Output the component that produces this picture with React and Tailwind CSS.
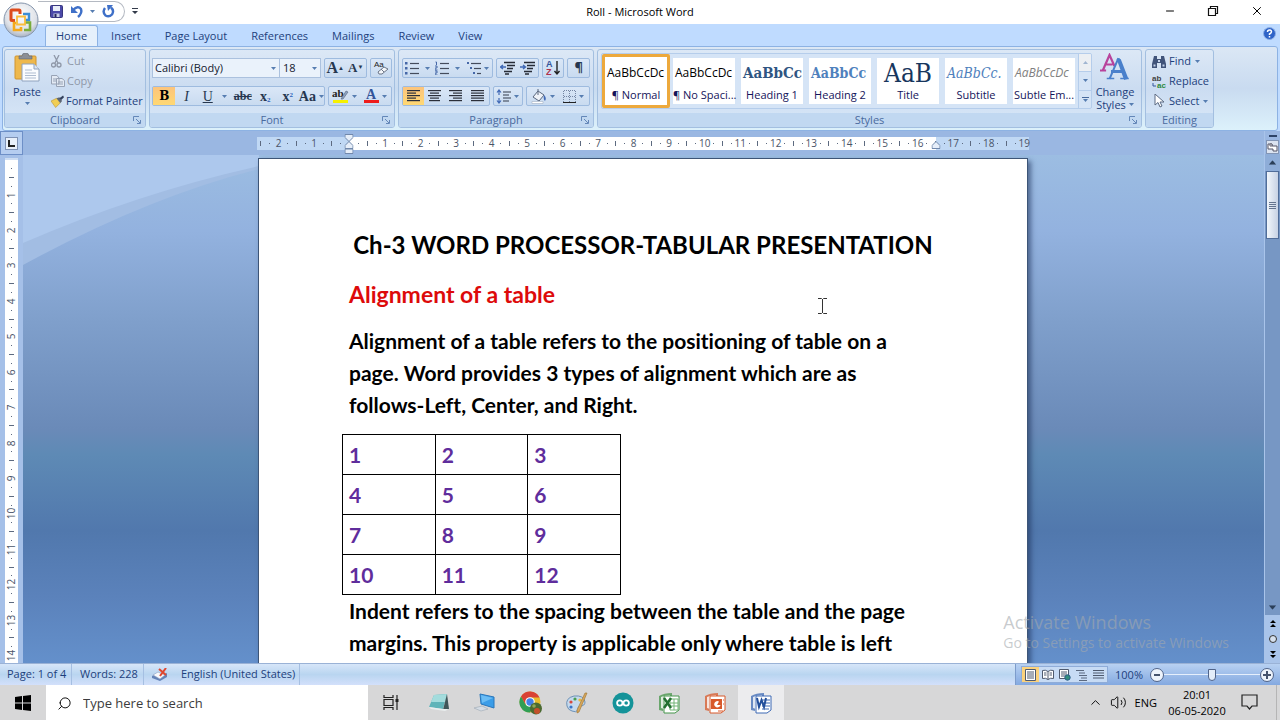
import { useState } from 'react';
import clsx from 'clsx';
import { ChevronUp, Volume2, Search, Minus, X } from 'lucide-react';

const tabs = ['Home', 'Insert', 'Page Layout', 'References', 'Mailings', 'Review', 'View'];

const styleCards = [
  { name: '¶ Normal', sample: 'AaBbCcDc', look: "font-['Open_Sans',sans-serif] text-[12px] text-black" },
  { name: '¶ No Spaci...', sample: 'AaBbCcDc', look: "font-['Open_Sans',sans-serif] text-[12px] text-black" },
  { name: 'Heading 1', sample: 'AaBbCc', look: "font-['DejaVu_Serif_Condensed','DejaVu_Serif',serif] text-[15px] font-bold text-[#2f5582]" },
  { name: 'Heading 2', sample: 'AaBbCc', look: "font-['DejaVu_Serif_Condensed','DejaVu_Serif',serif] text-[14px] font-bold text-[#4f81bd]" },
  { name: 'Title', sample: 'AaB', look: "font-['DejaVu_Serif_Condensed','DejaVu_Serif',serif] text-[26px] text-[#17365d]" },
  { name: 'Subtitle', sample: 'AaBbCc.', look: "font-['DejaVu_Serif_Condensed','DejaVu_Serif',serif] text-[14px] italic text-[#4f81bd]" },
  { name: 'Subtle Em...', sample: 'AaBbCcDc', look: "font-['Open_Sans',sans-serif] text-[12px] italic text-[#7f7f7f]" },
];

const tableRows = [[1, 2, 3], [4, 5, 6], [7, 8, 9], [10, 11, 12]];

const Caret = ({ className }) => (
  <svg className={clsx('shrink-0', className)} width="5" height="3" viewBox="0 0 5 3" fill="#567db1"><path d="M0 0h5L2.5 3z" /></svg>
);

const Group = ({ title, launcher, className, children }) => (
  <section className={clsx('flex flex-col rounded-[3px] border border-[#a3bfe0] bg-gradient-to-b from-[#dce8f6] via-[#cbdcf1] to-[#d9e8f8]', className)}>
    <div className="flex-1 min-h-0">{children}</div>
    <div className="relative h-[14px] bg-[#c1d8f1] text-center text-[11px] leading-[14px] text-[#4a6a9e] rounded-b-[2px]">
      {title}
      {launcher && (
        <button aria-label={`${title} options`} className="absolute right-[4px] top-[3px]">
          <svg width="8" height="8" viewBox="0 0 8 8" fill="none" stroke="#6487b8"><path d="M.5 5V.5H6M3 3l4 4M7.500 4v3.500H4" /></svg>
        </button>
      )}
    </div>
  </section>
);

const Bar = ({ className, children }) => (
  <div className={clsx('flex h-[20px] items-stretch rounded-[2px] border border-[#9ebbdf] bg-gradient-to-b from-[#dae7f7] to-[#c9dbf0]', className)}>{children}</div>
);

const Tool = ({ label, active, className, children }) => (
  <button aria-label={label} title={label}
    className={clsx('flex flex-1 items-center justify-center gap-[3px] text-[#26374f]', active && 'bg-gradient-to-b from-[#fcc47c] to-[#ffd873]', className)}>
    {children}
  </button>
);

const AlignIcon = ({ mode }) => {
  const rows = { left: [[0, 13], [0, 9], [0, 13], [0, 9], [0, 13]], center: [[0, 13], [2, 9], [0, 13], [2, 9], [1, 11]], right: [[0, 13], [4, 9], [0, 13], [4, 9], [0, 13]], justify: [[0, 13], [0, 13], [0, 13], [0, 13], [0, 13]] }[mode];
  return (
    <svg width="14" height="12" viewBox="0 0 14 12" fill="#2b2f3a">
      {rows.map(([x, w], i) => <rect key={i} x={x} y={i * 2.5} width={w} height="1.200" />)}
    </svg>
  );
};

const ListIcon = ({ mode }) => (
  <svg width="14" height="14" viewBox="0 0 14 14">
    {[1, 6, 11].map((y, i) => (
      <g key={y}>
        {mode === 'bullets' && <rect x="0" y={y} width="2.500" height="2.500" fill="#4668a8" />}
        {mode === 'numbers' && <path d={i ? `M0 ${y - 1}h2v2H0v2h2.500` : 'M.5 1h1v3'} fill="none" stroke="#4668a8" />}
        {mode === 'levels' && <path d={`M${i * 3} ${y}h2v2h-2z`} fill="#4668a8" />}
        <path d={`M${mode === 'levels' ? 4 + i * 3 : 5} ${y + 1.5}H14`} stroke="#444c5c" strokeWidth="1.200" />
      </g>
    ))}
  </svg>
);

const IndentIcon = ({ flip }) => (
  <svg width="15" height="14" viewBox="0 0 15 14" fill="none">
    <path d="M4 1.500h11M7 4.500h8M7 7.500h6M4 10.500h8M5 13h4" stroke="#262b36" strokeWidth="1.400" />
    <path d={flip ? 'M0 6h5M3 4l2.500 2L3 8' : 'M6 6H1M3 4L.5 6 3 8'} stroke="#3f68b5" strokeWidth="1.400" />
  </svg>
);

const PasteIcon = () => (
  <svg width="26" height="29" viewBox="0 0 26 29">
    <rect x="1" y="3" width="21" height="23" rx="1" fill="#eeb84c" stroke="#cf9430" />
    <path d="M5 5V3h3q0-3 3.500-3T15 3h3v3H5z" fill="#8b8f96" stroke="#5f6670" strokeWidth=".6" />
    <path d="M8 11h12l5 5v12H8z" fill="#fafcff" stroke="#8fa2bd" />
    <path d="M20 11v5h5" fill="#dbe6f4" stroke="#8fa2bd" />
    <path d="M11 17h7M11 20h11M11 22.500h11M11 25h11" stroke="#aebcd0" />
  </svg>
);

function TitleBar() {
  return (
    <header className="relative flex h-[24px] items-start bg-white">
      <button aria-label="Office Button" className="absolute left-[3px] top-[2px] z-10">
        <svg width="36" height="36" viewBox="0 0 36 36">
          <defs>
            <radialGradient id="orb" cx=".5" cy=".35" r=".65">
              <stop offset="0" stopColor="#fff" /><stop offset=".7" stopColor="#dfe2e8" /><stop offset="1" stopColor="#a9b3c2" />
            </radialGradient>
          </defs>
          <circle cx="18" cy="18" r="17" fill="url(#orb)" stroke="#8595ac" />
          <g fill="none">
            <path d="M12 18.500H9q-1 0-1-1V9q0-1 1-1h7q1 0 1 1v3" stroke="#dd4b1c" strokeWidth="3" />
            <path d="M20 12h6v6h-4" stroke="#3c8ed6" strokeWidth="2.400" />
            <path d="M13 21h-2v7h7v-3" stroke="#f4a91b" strokeWidth="2.600" />
            <path d="M22 20.500h5V28h-6" stroke="#79ac3c" strokeWidth="2.600" />
            <path d="M14 14.500h8v8h-8z" stroke="#f9bd3c" strokeWidth="1.800" />
          </g>
        </svg>
      </button>
      <div className="ml-[38px] flex h-[21px] w-[87px] items-center rounded-r-full border border-l-0 border-[#b4b9c2] pl-[12px] mt-px">
        <button aria-label="Save">
          <svg width="13" height="13" viewBox="0 0 13 13"><rect x=".5" y=".5" width="12" height="12" rx="1" fill="#4b49a8" stroke="#37367f" /><path d="M3 1h7v5H3z" fill="#e9edf8" /><path d="M3.500 8.500h6V12h-6z" fill="#c9cfe4" /><path d="M4.500 9h2v3h-2z" fill="#25255c" /></svg>
        </button>
        <button aria-label="Undo" className="ml-[8px] flex items-center gap-[6px]">
          <svg width="13" height="13" viewBox="0 0 13 13"><path d="M2 5Q7 0 10 4q1.500 4-3 8" fill="none" stroke="#3f70c8" strokeWidth="2.400" /><path d="M0 1v7h7z" fill="#3f70c8" /></svg>
          <Caret />
        </button>
        <button aria-label="Repeat" className="ml-[7px]">
          <svg width="13" height="13" viewBox="0 0 13 13"><path d="M3 3Q0 7 3.500 10.500 7 12.500 10 9.500q2.500-4-1-7" fill="none" stroke="#3f70c8" strokeWidth="2.400" /><path d="M5 0h6L6 6z" fill="#3f70c8" /></svg>
        </button>
      </div>
      <button aria-label="Customize Quick Access Toolbar" className="ml-[7px] mt-[8px]">
        <svg width="6" height="7" viewBox="0 0 6 7" fill="#333b4a"><path d="M0 0h6v1H0zM0 3h6L3 6z" /></svg>
      </button>
      <h1 className="absolute inset-x-0 top-[4px] text-center text-[11px] leading-[16px] text-black pointer-events-none">Roll - Microsoft Word</h1>
      <div className="ml-auto mr-[16px] flex gap-[31px] pt-[4px] text-black">
        <button aria-label="Minimize"><Minus size={12} strokeWidth={2} /></button>
        <button aria-label="Restore"><svg width="12" height="12" viewBox="0 0 12 12" fill="none" stroke="#111" strokeWidth="1.200"><path d="M1.500 3.500h7v7h-7zM3.500 3.500v-2h7v7h-2" /></svg></button>
        <button aria-label="Close"><X size={14} strokeWidth={1.700} /></button>
      </div>
    </header>
  );
}

function TabStrip({ tab, setTab }) {
  return (
    <nav className="flex h-[22px] items-end bg-[#bfdbff] pl-[45px] pr-[4px]">
      {tabs.map(t => (
        <button key={t} onClick={() => setTab(t)}
          className={clsx('mr-[2px] h-[21px] rounded-t-[3px] border border-b-0 px-[10px] pb-px text-[11px] leading-[19px] text-[#1d3f7c]',
            t === tab ? 'border-[#8db2e3] bg-[#e6f0fb]' : 'border-transparent')}>
          {t}
        </button>
      ))}
      <button aria-label="Help" className="mb-[6px] ml-auto">
        <svg width="13" height="13" viewBox="0 0 13 13"><circle cx="6.500" cy="6.500" r="6" fill="#2f64c8" stroke="#8fb0e4" /><path d="M4.500 5q0-2 2-2t2 1.700Q8.500 6 6.500 7v1M6.500 9v1.500" fill="none" stroke="#fff" strokeWidth="1.500" /></svg>
      </button>
    </nav>
  );
}

function ClipboardGroup() {
  return (
    <Group title="Clipboard" launcher className="w-[142px]">
      <div className="flex pl-[9px] pt-[3px]">
        <button className="flex w-[26px] flex-col items-center text-[11px] leading-[15px] text-[#1d3f7c]">
          <PasteIcon />
          <span className="pt-[2px]">Paste</span>
          <Caret className="mt-[3px]" />
        </button>
        <div className="ml-[11px] flex flex-col gap-[4px] text-[11px] leading-[16px] text-[#1d3f7c]">
          <button className="flex items-center gap-[4px] text-[#8f98a8]">
            <svg width="12" height="13" viewBox="0 0 12 13" fill="none" stroke="#8f98a8" strokeWidth="1.300"><path d="M3 0l4 8M8 0L4 8" /><circle cx="2.500" cy="10" r="2" /><circle cx="8" cy="10" r="2" /></svg>
            Cut
          </button>
          <button className="flex items-center gap-[2px] text-[#8f98a8]">
            <svg width="14" height="12" viewBox="0 0 14 12" fill="#e3eaf4" stroke="#98a3b5"><path d="M.5.5H6L8 3v6H.5zM5.500 3.500H11l2.500 2V11.500h-8z" /><path d="M2 4h3M2 6h3M7 7h5M7 9h5" /></svg>
            Copy
          </button>
          <button className="flex items-center gap-[2px] whitespace-nowrap">
            <svg width="13" height="13" viewBox="0 0 14 13"><path d="M0 6l6-3 4 5-5 5z" fill="#f1ce55" stroke="#b7912f" strokeWidth=".6" /><path d="M6 3l3-1 3 4-2 2z" fill="#5d6675" /><path d="M9 3l4-3 1 2-3 3z" fill="#33405c" /></svg>
            Format Painter
          </button>
        </div>
      </div>
    </Group>
  );
}

function FontGroup() {
  return (
    <Group title="Font" launcher className="w-[246px]">
      <div className="flex flex-col gap-[8px] px-[2px] pt-[8px]">
        <div className="flex gap-[3px]">
          <div className="flex text-[11px] text-[#14202f]">
            <label className="relative flex items-center">
              <select aria-label="Font" className="h-[20px] w-[128px] appearance-none border border-[#abc1de] bg-[#eaf2fb] pl-[2px] outline-none"><option>Calibri (Body)</option></select>
              <Caret className="absolute right-[4px]" />
            </label>
            <label className="relative -ml-px flex items-center">
              <select aria-label="Font size" className="h-[20px] w-[42px] appearance-none border border-[#abc1de] bg-[#eaf2fb] pl-[3px] outline-none"><option>18</option></select>
              <Caret className="absolute right-[4px]" />
            </label>
          </div>
          <Bar className="w-[43px] font-['Liberation_Serif',serif] font-bold">
            <Tool label="Grow Font" className="text-[16px]"><span>A<sup className="text-[6px]">▲</sup></span></Tool>
            <Tool label="Shrink Font" className="text-[13px]"><span>A<sup className="text-[6px]">▼</sup></span></Tool>
          </Bar>
          <Bar className="w-[22px]">
            <Tool label="Clear Formatting">
              <svg width="16" height="16" viewBox="0 0 16 16"><text x="1" y="7" fontSize="8" fontFamily="Liberation Sans" fill="#222">Aa</text><path d="M5 12l6-5 4 2-6 5H6z" fill="#f4f7fb" stroke="#6b7587" /><path d="M8 9l3 3" stroke="#6b7587" /></svg>
            </Tool>
          </Bar>
        </div>
        <div className="flex gap-[3px] font-['Liberation_Serif',serif] text-[14px]">
          <Bar className="w-[173px]">
            <Tool label="Bold" active className="font-['DejaVu_Serif',serif] text-[12px] font-bold text-black">B</Tool>
            <Tool label="Italic" className="italic">I</Tool>
            <Tool label="Underline" className="grow-[1.5]"><span className="underline">U</span><Caret className="ml-[6px]" /></Tool>
            <Tool label="Strikethrough" className="text-[12px] font-bold line-through">abc</Tool>
            <Tool label="Subscript" className="font-bold"><span>x<sub className="text-[7px] text-[#2b5fb8]">2</sub></span></Tool>
            <Tool label="Superscript" className="font-bold"><span>x<sup className="text-[7px] text-[#2b5fb8]">2</sup></span></Tool>
            <Tool label="Change Case" className="font-bold">Aa<Caret /></Tool>
          </Bar>
          <Bar className="w-[64px]">
            <Tool label="Highlight">
              <svg width="17" height="16" viewBox="0 0 17 16"><text x="0" y="9" fontSize="11" fontFamily="Liberation Serif" fontWeight="bold" fill="#222">ab</text><path d="M9 11l5-8 2 1-5 7z" fill="#8fa5c4" stroke="#53617a" strokeWidth=".6" /><rect x="1" y="12" width="15" height="3" fill="#f6f000" /></svg>
              <Caret />
            </Tool>
            <Tool label="Font Color">
              <svg width="15" height="16" viewBox="0 0 15 16"><text x="2" y="11" fontSize="14" fontFamily="Liberation Serif" fontWeight="bold" fill="#33549a">A</text><rect x="0" y="12" width="15" height="3" fill="#ee1c1c" /></svg>
              <Caret />
            </Tool>
          </Bar>
        </div>
      </div>
    </Group>
  );
}

function ParagraphGroup() {
  return (
    <Group title="Paragraph" launcher className="w-[196px]">
      <div className="flex flex-col gap-[8px] px-[3px] pt-[8px]">
        <div className="flex gap-[3px]">
          <Bar className="w-[93px]">
            <Tool label="Bullets"><ListIcon mode="bullets" /><Caret className="ml-[3px]" /></Tool>
            <Tool label="Numbering"><ListIcon mode="numbers" /><Caret className="ml-[3px]" /></Tool>
            <Tool label="Multilevel List"><ListIcon mode="levels" /><Caret /></Tool>
          </Bar>
          <Bar className="w-[43px]">
            <Tool label="Decrease Indent"><IndentIcon /></Tool>
            <Tool label="Increase Indent"><IndentIcon flip /></Tool>
          </Bar>
          <Bar className="w-[23px]">
            <Tool label="Sort">
              <svg width="15" height="16" viewBox="0 0 15 16" fontFamily="Liberation Sans" fontWeight="bold" fontSize="9"><text x="0" y="7" fill="#33549a">A</text><text x="0" y="15" fill="#b0304a">Z</text><path d="M11 1v13M8.500 11l2.500 3 2.500-3" fill="none" stroke="#222" strokeWidth="1.400" /></svg>
            </Tool>
          </Bar>
          <Bar className="w-[23px] text-[13px] font-bold"><Tool label="Show/Hide">¶</Tool></Bar>
        </div>
        <div className="flex gap-[3px]">
          <Bar className="w-[88px]">
            <Tool label="Align Left" active><AlignIcon mode="left" /></Tool>
            <Tool label="Center"><AlignIcon mode="center" /></Tool>
            <Tool label="Align Right"><AlignIcon mode="right" /></Tool>
            <Tool label="Justify"><AlignIcon mode="justify" /></Tool>
          </Bar>
          <Bar className="w-[31px]">
            <Tool label="Line Spacing">
              <svg width="15" height="15" viewBox="0 0 15 15" fill="none"><path d="M3 1v5M1 3.500L3 1l2 2.500M3 9v5M1 11.500L3 14l2-2.500" stroke="#3f68b5" strokeWidth="1.200" /><path d="M7 3h8M7 6h6M7 9h8M7 12h6" stroke="#333b4a" strokeWidth="1.200" /></svg>
              <Caret />
            </Tool>
          </Bar>
          <Bar className="w-[64px]">
            <Tool label="Shading">
              <svg width="16" height="15" viewBox="0 0 16 15"><path d="M2 8l5-6 6 4-5 6z" fill="#eef2f8" stroke="#59677e" /><path d="M7 0v6" stroke="#59677e" /><path d="M13 6q3 3 1 6-2-2-1-6z" fill="#3f68b5" /><path d="M1 12.500h11v2H1z" fill="#fff" stroke="#97a4b8" strokeWidth=".5" /></svg>
              <Caret />
            </Tool>
            <Tool label="Borders">
              <svg width="13" height="13" viewBox="0 0 13 13" fill="none"><path d="M.5 12V.5h12V12M6.500 1v11M1 6.500h11" stroke="#7586a3" strokeDasharray="1 1" /><path d="M0 12.500h13" stroke="#222" /></svg>
              <Caret />
            </Tool>
          </Bar>
        </div>
      </div>
    </Group>
  );
}

function StylesGroup() {
  const [selected, setSelected] = useState(0);
  return (
    <Group title="Styles" launcher className="w-[545px]">
      <div className="flex px-[3px] pt-[3px]">
        <div className="flex h-[56px] overflow-hidden rounded-[2px] border border-[#b5cdeb] bg-[#d5e4f6]">
          {styleCards.map((s, i) => (
            <button key={s.name} onClick={() => setSelected(i)}
              className={clsx('w-[68px] border-[3px] text-[11px] text-[#14145a]', i === selected ? 'rounded-[2px] border-[#eda93c]' : 'border-transparent py-px')}>
              <span className={clsx('flex flex-col bg-white', i === selected ? 'h-[48px] pt-[2px]' : 'h-[46px] pt-px')}>
                <span className={clsx('flex h-[28px] shrink-0 items-center whitespace-nowrap leading-[28px] px-[2px]', s.sample === 'AaB' && 'justify-center', s.look)}>{s.sample}</span>
                <span className="whitespace-nowrap text-center leading-[16px]">{s.name}</span>
              </span>
            </button>
          ))}
          <div className="flex w-[13px] flex-col divide-y divide-[#b5cdeb] border-l border-[#b5cdeb]">
            <button aria-label="Previous styles" className="flex flex-1 items-center justify-center bg-[#eceff3]"><Caret className="rotate-180 opacity-50" /></button>
            <button aria-label="Next styles" className="flex flex-1 items-center justify-center"><Caret /></button>
            <button aria-label="More styles" className="flex flex-1 flex-col items-center justify-center gap-px"><span className="h-px w-[7px] bg-[#46699d]" /><Caret /></button>
          </div>
        </div>
        <button className="flex flex-1 flex-col items-center text-[11px] leading-[13px] text-[#1d3f7c]">
          <svg width="30" height="29" viewBox="0 0 30 29" fill="none" strokeLinecap="square">
            <path d="M3 17L9.500 2 14 12M5.500 11.500h6M1 17.500h4" stroke="#b8439c" strokeWidth="2.200" />
            <path d="M10 25L18 6l2 1 7 18" stroke="#4a80cb" strokeWidth="2" /><path d="M18.500 7L25 25M12.500 18.500h10" stroke="#4a80cb" strokeWidth="3" />
            <path d="M7.500 25.500h6M21 25.500h7" stroke="#4a80cb" strokeWidth="1.500" />
          </svg>
          <span className="pt-[3px]">Change</span>
          <span className="flex items-center gap-[3px]">Styles <Caret /></span>
        </button>
      </div>
    </Group>
  );
}

function EditingGroup() {
  return (
    <Group title="Editing" className="w-[69px]">
      <div className="flex flex-col gap-[4px] pl-[6px] pt-[3px] text-[11px] leading-[16px] text-[#1d3f7c]">
        <button className="flex items-center gap-[3px]">
          <svg width="14" height="13" viewBox="0 0 14 13" fill="#41547a"><path d="M2 1h3v3h4V1h3l2 8v4H9V8H5v5H0V9z" /><path d="M1.500 9.500h2v2h-2zM10.500 9.500h2v2h-2zM6 5h2v2H6z" fill="#c6d4ea" /></svg>
          Find <Caret className="ml-px" />
        </button>
        <button className="flex items-center gap-[3px]">
          <svg width="14" height="15" viewBox="0 0 14 15" fontFamily="Liberation Sans" fontWeight="bold" fontSize="8"><text x="0" y="7" fill="#444">ab</text><text x="5" y="14" fill="#2c8a3c">ac</text><path d="M1 9v3h3" fill="none" stroke="#33549a" /></svg>
          Replace
        </button>
        <button className="flex items-center gap-[3px]">
          <svg width="14" height="14" viewBox="0 0 14 14"><path d="M3 0v11l3-2.500L8 13l2-1-2-4h4z" fill="#fff" stroke="#5c6b83" /></svg>
          Select <Caret className="ml-px" />
        </button>
      </div>
    </Group>
  );
}

function HorizontalRuler() {
  const marks = Array.from({ length: 87 }, (_, i) => i - 10);
  return (
    <div className="flex h-[24px] items-start justify-center bg-[#9ab7e2] pr-[2px] pt-[6px]">
      <div className="relative flex h-[13px] w-[772px] items-center bg-[linear-gradient(to_right,#c0d8f4_12%,#fff_12%,#fff_88%,#c0d8f4_88%)] text-[10px] leading-[13px] text-[#4a5468]">
        {marks.map(n => (
          <span key={n} className="flex w-0 flex-1 justify-center">
            {n === 0 ? '' : n % 4 === 0 ? Math.abs(n / 4) : n % 2 === 0 ? <i className="h-[5px] w-px bg-[#5d6a80]" /> : <i className="size-[1px] bg-[#5d6a80]" />}
          </span>
        ))}
        <svg className="absolute -top-[3px] left-[12%] -translate-x-1/2" width="9" height="20" viewBox="0 0 9 20" fill="#e6eef9" stroke="#7188ab"><path d="M.5.500h8v3l-4 4-4-4zM4.500 7.500l4 4v3h-8v-3zM.5 15h8v4.500h-8z" /></svg>
        <svg className="absolute top-[4px] left-[88%] -translate-x-1/2" width="9" height="8" viewBox="0 0 9 8" fill="#e6eef9" stroke="#7188ab"><path d="M4.500.500l4 4v3h-8v-3z" /></svg>
      </div>
    </div>
  );
}

function VerticalRuler() {
  const marks = Array.from({ length: 56 }, (_, i) => i + 1);
  return (
    <aside className="w-[23px] shrink-0 bg-[#a5c0e8] pl-[5px] pt-[3px]">
      <div className="h-full w-[13px] border-t-2 border-[#cdddf2] bg-white pt-[4px]">
        <div className="flex h-[496px] flex-col text-[10px] leading-[13px] text-[#4a5468]">
          {marks.map(n => (
            <span key={n} className="flex h-0 flex-1 items-center justify-center">
              {n % 4 === 0 ? <b className="-rotate-90 font-normal">{n / 4}</b> : n % 2 === 0 ? <i className="h-px w-[5px] bg-[#5d6a80]" /> : <i className="size-[1px] bg-[#5d6a80]" />}
            </span>
          ))}
        </div>
      </div>
    </aside>
  );
}

function DocumentPage() {
  return (
    <article className="w-[770px] shrink-0 border border-b-0 border-[#3d5577] bg-white px-[90px] pt-[70px] font-['Lato',sans-serif] text-[21px] font-bold leading-[32px] text-black shadow-[3px_3px_5px_rgba(30,50,90,0.6)] [font-variant-ligatures:none]">
      <h2 className="whitespace-nowrap text-center text-[24px]">Ch-3 WORD PROCESSOR-TABULAR PRESENTATION</h2>
      <h3 className="mt-[17px] text-[23px] text-[#dd0a0a]">Alignment of a table</h3>
      <p className="mt-[15px] whitespace-nowrap">
        Alignment of a table refers to the positioning of table on a<br />
        page. Word provides 3 types of alignment which are as<br />
        follows-Left, Center, and Right.
      </p>
      <table className="-ml-[7px] mt-[13px] w-[279px] table-fixed border-collapse text-[#5f2d9c]">
        <tbody>
          {tableRows.map(row => (
            <tr key={row[0]} className="h-[40px]">
              {row.map(n => <td key={n} className="border border-black px-[6px] py-0">{n}</td>)}
            </tr>
          ))}
        </tbody>
      </table>
      <p className="whitespace-nowrap">
        Indent refers to the spacing between the table and the page<br />
        margins. This property is applicable only where table is left
      </p>
    </article>
  );
}

function Workspace() {
  return (
    <main className="relative flex min-w-0 flex-1 justify-center overflow-hidden bg-[linear-gradient(#9cbde2,#93b2df_15%,#7f9fcb_33%,#6a8ab8_54%,#5e8ab5_59%,#5178ad_74%,#5b82bb_87%,#6490cb)] pr-px pt-[3px]">
      <svg className="absolute left-0 top-0" width="236" height="115" viewBox="0 0 236 115">
        <path d="M0 0h236v14Q125 42 0 110z" fill="#a2bde3" />
        <path d="M0 0h236v11Q115 38 0 88z" fill="#adc8ed" />
      </svg>
      <div className="relative flex"><DocumentPage /></div>
      <svg className="absolute left-[795px] top-[143px]" width="9" height="16" viewBox="0 0 9 16" fill="none" stroke="#333"><path d="M0 .5h3.500l1 1 1-1H9M4.500 1v14M0 15.500h3.500l1-1 1 1H9" /></svg>
      <div className="absolute bottom-[11px] right-[35px] text-[#a3a9ae]/60">
        <p className="text-[18px] leading-[24px]">Activate Windows</p>
        <p className="text-[14px] leading-[18px]">Go to Settings to activate Windows</p>
      </div>
    </main>
  );
}

function ScrollBar() {
  return (
    <aside className="flex w-[16px] shrink-0 flex-col items-center border-l border-[#a9c4ea] bg-[#9ab7e2]">
      <span className="mt-[4px] h-[2px] w-[8px] bg-[#2e4468]" />
      <button aria-label="View Ruler" className="mt-[3px] flex h-[14px] w-[13px] items-center justify-center border border-[#8295b5] bg-[#dbe3f0]">
        <svg width="11" height="11" viewBox="0 0 11 11" fill="#fff" stroke="#556"><path d="M1 2h4v2h5v5H6V7H1z" /><circle cx="4" cy="3" r="1.200" /></svg>
      </button>
      <button aria-label="Scroll up" className="flex h-[17px] w-full items-center justify-center bg-[#8eadd8]"><Caret className="rotate-180 scale-150 brightness-50" /></button>
      <div className="w-full flex-1 bg-[#7797c4] px-px">
        <div className="flex h-[68px] flex-col items-center justify-center gap-px border border-[#506d99] bg-gradient-to-r from-[#f1f6fb] to-[#c7d2e4]">
          {[0, 1, 2, 3].map(n => <span key={n} className="h-px w-[7px] bg-[#64748f]" />)}
        </div>
      </div>
      <button aria-label="Scroll down" className="flex h-[15px] w-full items-center justify-center bg-[#7797c4]"><Caret className="scale-150 brightness-50" /></button>
      <div className="flex h-[48px] w-full flex-col items-center justify-between bg-[#a9c4ea] py-[5px]">
        <button aria-label="Previous Page"><svg className="block" width="6" height="7" viewBox="0 0 6 7"><path d="M0 3l3-3 3 3zM0 7l3-3 3 3z" /></svg></button>
        <button aria-label="Select Browse Object" className="size-[8px] rounded-full border border-[#333] bg-[#d5e0ee]" />
        <button aria-label="Next Page"><svg className="block" width="6" height="7" viewBox="0 0 6 7"><path d="M0 0l3 3 3-3zM0 4l3 3 3-3z" /></svg></button>
      </div>
    </aside>
  );
}

const views = [
  ['Print Layout', <svg width="11" height="12" viewBox="0 0 11 12" fill="#fff" stroke="#4f5a6e"><path d="M.5.500h10v11H.5zM2 3h7M2 5h7M2 7h7M2 9h7" /></svg>],
  ['Full Screen Reading', <svg width="12" height="12" viewBox="0 0 12 12" fill="#fff" stroke="#4f5a6e"><path d="M.5 1.500q3-1 5.500 1 2.500-2 5.500-1v8q-3-1-5.500 1-2.500-2-5.500-1zM6 2.500v8M2 4h2.500M2 6h2.500M7.500 4H10M7.500 6H10" /></svg>],
  ['Web Layout', <svg width="12" height="12" viewBox="0 0 12 12" fill="#fff" stroke="#4f5a6e"><path d="M.5.500h9v9h-9zM2 3h6M2 5h6M2 7h4" /><circle cx="8.500" cy="8.500" r="2.700" fill="#338d7c" stroke="#2a5d88" /></svg>],
  ['Outline', <svg width="12" height="12" viewBox="0 0 12 12" stroke="#5b6980"><path d="M0 1.500h8M3 4h6M3 6.500h8M5 9h6M3 11.500h8" /></svg>],
  ['Draft', <svg width="11" height="12" viewBox="0 0 11 12" stroke="#4f5a6e"><path d="M0 1.500h11M0 4h11M0 6.500h11M0 9h11" /></svg>],
];

function StatusBar() {
  const [zoom, setZoom] = useState(50);
  return (
    <footer className="flex h-[22px] items-stretch border-t border-[#9ab2d6] bg-gradient-to-b from-[#d7e6f9] via-[#b9d5f0] to-[#d3e0fb] text-[11px] leading-[20px] text-[#1d3f7c]">
      <button className="w-[72px] border-r border-[#a5bfe2] pb-px pl-[7px] text-left">Page: 1 of 4</button>
      <button className="w-[72px] border-r border-[#a5bfe2] pb-px pl-[8px] text-left">Words: 228</button>
      <button aria-label="Proofing" className="flex items-center pl-[8px]">
        <svg width="16" height="14" viewBox="0 0 16 14"><path d="M0 8l5-3 6 2 4-2v4l-7 4-8-3z" fill="#6483b8" /><path d="M1 7l5-3 7 3-5 4z" fill="#f7f9fc" stroke="#8ba0c2" strokeWidth=".6" /><path d="M7 1l7 6M14 0L8 8" stroke="#e0472f" strokeWidth="2" /></svg>
      </button>
      <button className="border-r border-[#a5bfe2] pb-px pl-[13px] pr-[4px]">English (United States)</button>
      <div className="ml-auto flex items-center border-l border-[#7d9ccb] bg-gradient-to-b from-[#b8d1f2] to-[#84a9e0] pl-[5px] pr-[6px]">
        <div className="flex h-[17px] border border-[#8facd8] bg-[#c7dbf4]">
          {views.map(([name, icon], i) => (
            <button key={name} aria-label={name} className={clsx('flex w-[17px] items-center justify-center', i === 0 && 'bg-[#fbd27c]')}>{icon}</button>
          ))}
        </div>
        <button className="w-[42px] text-center">100%</button>
        <button aria-label="Zoom out" className="flex size-[14px] items-center justify-center rounded-full border border-[#50648a] bg-[#edf3fb]"><span className="h-[2px] w-[6px] bg-[#45536d]" /></button>
        <input aria-label="Zoom" type="range" value={zoom} onChange={e => setZoom(Number(e.target.value))}
          className="h-[14px] w-[96px] appearance-none bg-[linear-gradient(#e5effc,#e5effc)] bg-[length:100%_1px] bg-center bg-no-repeat outline-none [&::-webkit-slider-thumb]:h-[12px] [&::-webkit-slider-thumb]:w-[8px] [&::-webkit-slider-thumb]:appearance-none [&::-webkit-slider-thumb]:rounded-b-[4px] [&::-webkit-slider-thumb]:border [&::-webkit-slider-thumb]:border-[#50648a] [&::-webkit-slider-thumb]:bg-[#e3edf9]" />
        <button aria-label="Zoom in" className="flex size-[14px] items-center justify-center rounded-full border border-[#50648a] bg-[#edf3fb]">
          <svg width="8" height="8" viewBox="0 0 8 8" stroke="#45536d" strokeWidth="2"><path d="M0 4h8M4 0v8" /></svg>
        </button>
      </div>
    </footer>
  );
}

const officeIcon = (color, glyph) => (
  <svg width="22" height="22" viewBox="0 0 22 22" fill="none">
    <path d="M1 4q5-3 13-3v3H5v15l-4-1z" fill={color} opacity=".75" />
    <path d="M3 5q4-2 9-2v1H6v13l-3-1z" fill="#fff" opacity=".8" />
    <path d="M6 4h15v14l-4 3H6z" fill="#fff" stroke={color} />
    {glyph}
  </svg>
);

const apps = [
  ['Notepad', <svg width="22" height="22" viewBox="0 0 22 22"><path d="M6 3l13-1-4 15-14-2z" fill="#5fb4b9" /><path d="M6 3l13-1-2 8-14 0z" fill="#a3dcdd" /><path d="M19 2l2 15-6 1z" fill="#3f5659" /><path d="M1 15l14 2 6 0-4 2-14-2z" fill="#e9eeee" /></svg>],
  ['Remote Desktop', <svg width="22" height="22" viewBox="0 0 22 22"><path d="M6 2l14 3v11L7 12z" fill="#3b9de8" stroke="#2976bb" /><path d="M0 16l8-2 6 3-7 2z" fill="#d5dde5" stroke="#9ca8b4" strokeWidth=".6" /><path d="M7 3l12 3-11 5z" fill="#6bbdf5" /></svg>],
  ['Chrome', <svg width="24" height="24" viewBox="0 0 24 24"><circle cx="11" cy="11" r="10.500" fill="#e8bd2e" /><path d="M2 5.500a10.500 10.500 0 0 1 18.500 1H11L6.500 13.500z" fill="#d94235" /><path d="M2 5.500A10.500 10.500 0 0 0 11 21.500l4.500-8-9 0z" fill="#2f9e55" /><circle cx="11" cy="11" r="4.800" fill="#fff" /><circle cx="11" cy="11" r="3.700" fill="#4382e8" /><circle cx="17" cy="17.500" r="6" fill="#4b6a31" /><circle cx="18" cy="20" r="3" fill="#c4502b" /><circle cx="15" cy="15" r="1.800" fill="#8fa858" /></svg>],
  ['Paint', <svg width="24" height="22" viewBox="0 0 24 22"><path d="M2 14Q0 6 9 4q10-1 11 6 0 4-5 4-3 1-2 4-2 3-6 1-4-1-5-5z" fill="#c5d9ec" stroke="#6c91b7" /><circle cx="6" cy="10" r="1.600" fill="#d8483d" /><circle cx="10" cy="7" r="1.600" fill="#4a9f52" /><circle cx="15" cy="8" r="1.600" fill="#e8b83b" /><circle cx="6" cy="15" r="1.600" fill="#3974c6" /><path d="M22 1l-8 19-2 1 0-3 8-17z" fill="#d7a65b" stroke="#9b7230" strokeWidth=".6" /></svg>],
  ['Arduino', <svg width="22" height="22" viewBox="0 0 22 22"><circle cx="11" cy="11" r="10.500" fill="#149399" /><g fill="none" stroke="#fff" strokeWidth="1.800"><circle cx="7.800" cy="11" r="2.700" /><circle cx="14.200" cy="11" r="2.700" /></g></svg>],
  ['Excel', officeIcon('#45954a', <><path d="M12 7h8v11h-8zM12 11h8M12 14h8M16 7v11" stroke="#73b476" /><path d="M6 6l7 10M13 6L6 16" stroke="#236f31" strokeWidth="2.500" /></>)],
  ['PowerPoint', officeIcon('#d8592b', <><path d="M7 7h11v10H7z" fill="#d8592b" /><path d="M15 9.500a3.200 3.200 0 1 0 1.500 3.500h-3.500z" fill="#fff" /><path d="M14 19h5M19 8h1M19 12h1" stroke="#d8592b" /></>)],
  ['Word', officeIcon('#3c69b4', <><path d="M12 8h8M12 11h8M12 14h8M12 17h7" stroke="#3c69b4" strokeWidth="1.200" /><path d="M7 6l2 9 2.500-7 2.500 7 2-9" stroke="#234f9b" strokeWidth="2" /></>)],
];

function Taskbar() {
  return (
    <footer className="flex h-[35px] items-stretch bg-[#d7d7d8] text-black">
      <button aria-label="Start" className="flex w-[46px] items-center justify-center">
        <svg width="16" height="16" viewBox="0 0 16 16"><path d="M0 2l7-1v6.500H0zM8 1l8-1v7.500H8zM0 8.500h7V15l-7-1zM8 8.500h8V16l-8-1z" /></svg>
      </button>
      <label className="flex w-[322px] items-center gap-[11px] bg-white pl-[11px] pt-[2px]">
        <Search size={15} strokeWidth={1.500} className="shrink-0 -scale-x-100" />
        <input type="text" aria-label="Search" placeholder="Type here to search" className="w-full text-[13px] outline-none placeholder:text-[#3c3c3c]" />
      </label>
      <button aria-label="Task View" className="flex w-[46px] items-center justify-center">
        <svg width="16" height="15" viewBox="0 0 16 15" fill="none" stroke="#222" strokeWidth="1.200"><path d="M1 0v2.500h9V0M1 4.500h9v6H1zM1 15v-2.500h9V15M14 0v15" /><path d="M14 4v3" strokeWidth="3" /></svg>
      </button>
      <div className="ml-[2px] flex">
        {apps.map(([name, icon]) => (
          <button key={name} aria-label={name} className={clsx('flex w-[46px] items-center justify-center', name === 'Word' && 'bg-[#ececee]')}>{icon}</button>
        ))}
      </div>
      <div className="ml-auto flex items-center text-[11px] leading-[16px]">
        <button aria-label="Show hidden icons"><ChevronUp size={15} strokeWidth={1.500} /></button>
        <button aria-label="Volume" className="ml-[7px]"><Volume2 size={17} strokeWidth={1.300} /></button>
        <button className="ml-[8px]">ENG</button>
        <button className="ml-[10px] w-[60px] whitespace-nowrap text-center">20:01<br />06-05-2020</button>
        <button aria-label="Notifications" className="ml-[14px] mr-[18px]">
          <svg width="17" height="17" viewBox="0 0 17 17" fill="none" stroke="#222" strokeWidth="1.200"><path d="M1 1h15v11h-5l-2.500 3L6 12H1z" /></svg>
        </button>
        <span className="mr-[3px] h-full w-px bg-[#b5b5b5]" />
      </div>
    </footer>
  );
}

export default function App() {
  const [tab, setTab] = useState('Home');
  return (
    <div className="flex h-screen flex-col overflow-hidden font-['Open_Sans',sans-serif]">
      <TitleBar />
      <TabStrip tab={tab} setTab={setTab} />
      <div className="bg-[#bfdbff] px-[2px]">
        <div className="flex h-[85px] gap-[3px] rounded-[3px] border border-[#8db2e3] bg-gradient-to-b from-[#dbe7f5] via-[#c9dbf0] to-[#dcf1fb] px-px py-[2px]">
          <ClipboardGroup />
          <FontGroup />
          <ParagraphGroup />
          <StylesGroup />
          <EditingGroup />
        </div>
      </div>
      <div className="flex min-h-0 flex-1">
        <div className="flex min-w-0 flex-1 flex-col">
          <div className="flex bg-[#9ab7e2]">
            <button aria-label="Tab selector" className="flex h-[24px] w-[23px] items-center justify-center border border-[#6d8fc7] bg-[#b5cdf0]">
              <span className="flex size-[13px] items-center justify-center border border-[#7f92b5] bg-[#e9f0fa]">
                <svg width="7" height="7" viewBox="0 0 7 7" fill="none" stroke="#222" strokeWidth="2"><path d="M1 0v6h6" /></svg>
              </span>
            </button>
            <div className="min-w-0 flex-1"><HorizontalRuler /></div>
          </div>
          <div className="flex min-h-0 flex-1">
            <VerticalRuler />
            <Workspace />
          </div>
        </div>
        <ScrollBar />
      </div>
      <StatusBar />
      <Taskbar />
    </div>
  );
}
